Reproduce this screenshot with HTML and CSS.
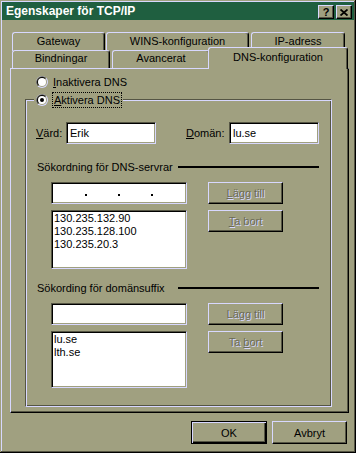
FILE: index.html
```html
<!DOCTYPE html>
<html lang="sv">
<head>
    <meta charset="UTF-8">
    <title>Egenskaper för TCP/IP</title>
    <link rel="stylesheet" href="styles.css">
</head>
<body>
    <div class="window">
        <div class="titlebar">
            <span class="title">Egenskaper för TCP/IP</span>
            <div class="caption-buttons">
                <span class="cap-btn">?</span>
                <span class="cap-btn">
                    <svg width="8" height="7" viewBox="0 0 8 7">
                        <path d="M0.5 0.5 L7.5 6.5 M7.5 0.5 L0.5 6.5" stroke="#000" stroke-width="1.8" fill="none"/>
                    </svg>
                </span>
            </div>
        </div>

        <div class="content">
            <div class="tabs">
                <div class="tabrow back">
                    <div class="tab tab-gateway">Gateway</div>
                    <div class="tab tab-wins">WINS-konfiguration</div>
                    <div class="tab tab-ip">IP-adress</div>
                </div>
                <div class="tabrow front">
                    <div class="tab tab-bind">Bindningar</div>
                    <div class="tab tab-adv">Avancerat</div>
                    <div class="tab tab-dns active">DNS-konfiguration</div>
                </div>
            </div>

            <div class="panel">
                <div class="radio-row">
                    <svg class="radio" width="12" height="12" viewBox="0 0 12 12">
                        <circle cx="6" cy="6" r="6" fill="#d8d8ff"/>
                        <path d="M10.24 1.76 A6 6 0 0 0 1.76 10.24 Z" fill="#555544"/>
                        <circle cx="6" cy="6" r="5" fill="#a0a080"/>
                        <path d="M9.54 2.46 A5 5 0 0 0 2.46 9.54 Z" fill="#000"/>
                        <circle cx="6" cy="6" r="4" fill="#fff"/>
                    </svg>
                    <span class="radio-label"><u>I</u>naktivera DNS</span>
                </div>

                <div class="group">
                    <div class="group-legend">
                        <svg class="radio" width="12" height="12" viewBox="0 0 12 12">
                            <circle cx="6" cy="6" r="6" fill="#d8d8ff"/>
                            <path d="M10.24 1.76 A6 6 0 0 0 1.76 10.24 Z" fill="#555544"/>
                            <circle cx="6" cy="6" r="5" fill="#a0a080"/>
                            <path d="M9.54 2.46 A5 5 0 0 0 2.46 9.54 Z" fill="#000"/>
                            <circle cx="6" cy="6" r="4" fill="#fff"/>
                            <circle cx="6" cy="6" r="2" fill="#000"/>
                        </svg>
                        <span class="focus-label"><u>A</u>ktivera DNS</span>
                    </div>

                    <div class="host-row">
                        <span class="host-label"><u>V</u>ärd:</span>
                        <div class="field host-field">Erik</div>
                        <span class="domain-label"><u>D</u>omän:</span>
                        <div class="field host-field">lu.se</div>
                    </div>

                    <div class="section-head">
                        <span class="section-title">Sökordning för DNS-servrar</span>
                        <span class="rule"></span>
                    </div>
                    <div class="editor">
                        <div class="field line-field ip-field">
                            <span class="seg"></span><span class="dot"></span>
                            <span class="seg"></span><span class="dot"></span>
                            <span class="seg"></span><span class="dot"></span>
                            <span class="seg"></span>
                        </div>
                        <button class="btn disabled"><u>L</u>ägg till</button>
                        <div class="field listbox list-servers">
                            <div>130.235.132.90</div>
                            <div>130.235.128.100</div>
                            <div>130.235.20.3</div>
                        </div>
                        <button class="btn disabled"><u>T</u>a bort</button>
                    </div>

                    <div class="section-head second">
                        <span class="section-title">Sökording för domänsuffix</span>
                        <span class="rule"></span>
                    </div>
                    <div class="editor">
                        <div class="field line-field"></div>
                        <button class="btn disabled">Lä<u>g</u>g till</button>
                        <div class="field listbox list-suffix">
                            <div>lu.se</div>
                            <div>lth.se</div>
                        </div>
                        <button class="btn disabled">Ta <u>b</u>ort</button>
                    </div>
                </div>
            </div>

            <div class="footer">
                <button class="btn default btn-ok">OK</button>
                <button class="btn btn-cancel">Avbryt</button>
            </div>
        </div>
    </div>
</body>
</html>
```

FILE: styles.css
```css
body {
    margin: 0;
    padding: 0;
    background-color: #a0a080;
    font-family: "Liberation Sans", Arial, sans-serif;
    font-size: 11px;
    line-height: 13px;
    color: #000;
}

u {
    text-decoration: underline;
    text-underline-offset: 1px;
}

.window {
    box-sizing: border-box;
    width: 356px;
    height: 453px;
    padding: 2px 2px 0 2px;
    background-color: #a0a080;
    box-shadow: inset -1px -1px 0 #000, inset 1px 1px 0 #a0a080,
        inset -2px -2px 0 #555544, inset 2px 2px 0 #d8d8ff;
}

.titlebar {
    display: flex;
    justify-content: space-between;
    height: 18px;
    padding: 0 2px 0 4px;
    background-color: #1f5f40;
}

.title {
    color: #fff;
    font-weight: bold;
    font-size: 12px;
    line-height: 18px;
}

.caption-buttons {
    display: flex;
    gap: 2px;
    margin-top: 3px;
}

.cap-btn {
    box-sizing: border-box;
    display: flex;
    align-items: center;
    justify-content: center;
    width: 16px;
    height: 14px;
    background-color: #a0a080;
    border: 1px solid;
    border-color: #d8d8ff #000 #000 #d8d8ff;
    box-shadow: inset -1px -1px 0 #555544;
    font-weight: bold;
    font-size: 11px;
    line-height: 12px;
}

.content {
    padding-left: 8px;
}

/* tabs */
.tabs {
    margin-top: 12px;
}

.tabrow {
    display: flex;
    margin-left: 2px;
}

.tabrow.back {
    height: 19px;
}

.tabrow.front {
    height: 21px;
    margin-top: -4px;
    align-items: flex-end;
}

.tab {
    box-sizing: border-box;
    background-color: #a0a080;
    border-left: 1px solid #d8d8ff;
    border-top: 1px solid #d8d8ff;
    border-right: 1px solid #000;
    box-shadow: inset -1px 0 0 #555544;
    border-radius: 3px 3px 0 0;
    text-align: center;
    white-space: nowrap;
}

.back .tab {
    height: 19px;
    padding-top: 2px;
}

.front .tab {
    height: 18px;
    padding-top: 1px;
}

.tab-gateway { width: 93px; }
.tab-wins { width: 143px; margin-left: 1px; }
.tab-ip { width: 94px; margin-left: 2px; }
.tab-bind { width: 98px; }
.tab-adv { width: 98px; margin-left: 2px; }

.front .tab.active {
    position: relative;
    z-index: 2;
    width: 140px;
    height: 22px;
    margin-left: -2px;
    margin-bottom: -1px;
    padding-top: 3px;
}

/* panel */
.panel {
    position: relative;
    z-index: 1;
    box-sizing: border-box;
    width: 339px;
    height: 345px;
    border-left: 1px solid #d8d8ff;
    border-top: 1px solid #d8d8ff;
    border-right: 1px solid #000;
    border-bottom: 1px solid #000;
    box-shadow: inset -1px -1px 0 #555544;
}

.radio-row {
    display: flex;
    align-items: center;
    height: 12px;
    margin-top: 7px;
    padding-left: 25px;
}

.radio {
    display: block;
    flex-shrink: 0;
}

.radio-label {
    margin-left: 5px;
}

.group {
    position: relative;
    box-sizing: border-box;
    width: 307px;
    height: 308px;
    margin: 11px 0 0 14px;
    border: 1px solid;
    border-color: #555544 #d8d8ff #d8d8ff #555544;
    box-shadow: inset 1px 1px 0 #d8d8ff, inset -1px -1px 0 #555544;
}

.group-legend {
    position: absolute;
    top: -8px;
    left: 8px;
    display: flex;
    align-items: center;
    padding: 0 1px 0 2px;
    background-color: #a0a080;
}

.focus-label {
    margin-left: 4px;
    padding: 0 1px;
    border: 1px dotted #000;
    line-height: 14px;
}

.field {
    box-sizing: border-box;
    background-color: #fff;
    border: 1px solid;
    border-color: #555544 #d8d8ff #d8d8ff #555544;
    box-shadow: inset 1px 1px 0 #000, inset -1px -1px 0 #a0a080;
}

.host-row {
    display: flex;
    align-items: center;
    margin-top: 22px;
    padding-left: 10px;
}

.host-label {
    width: 30px;
}

.domain-label {
    width: 43px;
    margin-left: 30px;
}

.host-field {
    width: 90px;
    height: 22px;
    padding: 4px 0 0 3px;
}

.section-head {
    display: flex;
    height: 13px;
    margin-top: 17px;
    padding-left: 11px;
}

.section-head.second {
    margin-top: 13px;
}

.section-title {
    width: 141px;
    white-space: nowrap;
}

.rule {
    width: 141px;
    height: 2px;
    margin-top: 5px;
    background-color: #000;
}

.editor {
    display: grid;
    grid-template-columns: 136px 75px;
    grid-template-rows: 22px auto;
    column-gap: 21px;
    row-gap: 6px;
    align-items: start;
    margin-top: 8px;
    padding-left: 25px;
}

.line-field {
    height: 22px;
}

.ip-field {
    display: flex;
    align-items: flex-end;
    padding: 0 0 7px 2px;
}

.seg {
    width: 31px;
}

.dot {
    width: 2px;
    height: 2px;
    background-color: #000;
}

.listbox {
    padding: 1px 2px;
}

.list-servers {
    height: 59px;
}

.list-suffix {
    height: 57px;
}

.btn {
    box-sizing: border-box;
    width: 75px;
    height: 22px;
    margin: 0;
    padding: 0;
    background-color: #a0a080;
    border: 1px solid;
    border-color: #d8d8ff #000 #000 #d8d8ff;
    box-shadow: inset -1px -1px 0 #555544;
    font-family: "Liberation Sans", Arial, sans-serif;
    font-size: 11px;
    color: #000;
}

.btn.disabled {
    color: #6c6c56;
    text-shadow: 1px 1px 0 #d8d8ff;
}

.footer {
    box-sizing: border-box;
    display: flex;
    justify-content: flex-end;
    gap: 5px;
    width: 339px;
    margin-top: 8px;
    padding-right: 2px;
}

.btn-ok,
.btn-cancel {
    height: 23px;
}

.btn-ok {
    width: 76px;
    border-color: #000;
    box-shadow: inset 1px 1px 0 #d8d8ff, inset -1px -1px 0 #000, inset -2px -2px 0 #555544;
}
```
